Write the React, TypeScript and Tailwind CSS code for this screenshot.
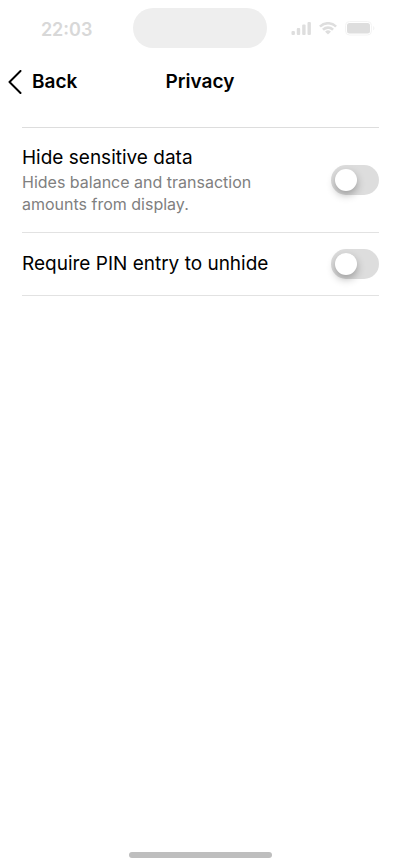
import { useState } from "react";

function StatusBar() {
  return (
    <div className="grid h-14 grid-cols-3 items-center">
      <span className="pt-1 text-center text-lg font-semibold leading-6 text-[#d8d8d8]">22:03</span>
      <div className="h-10 w-full rounded-full bg-[#eeeeee]" />
      <div className="flex items-center justify-center gap-2">
        <svg width="20" height="13" viewBox="0 0 20 13" fill="#dedede" aria-hidden="true">
          <rect x="0.5" y="9" width="3.4" height="4" rx="1" />
          <rect x="5.8" y="6" width="3.4" height="7" rx="1" />
          <rect x="11.2" y="2.5" width="3.4" height="10.5" rx="1" />
          <rect x="16.5" y="0" width="3.4" height="13" rx="1" />
        </svg>
        <svg width="18" height="13" viewBox="0 0 18 13" fill="#dedede" aria-hidden="true">
          <path d="M9 2.6c2.6 0 5 1 6.9 2.7.1.1.4.1.5 0l1.3-1.3c.2-.2.2-.4 0-.6A12.7 12.7 0 0 0 .3 3.4c-.2.2-.2.4 0 .6l1.3 1.3c.1.1.4.1.5 0A10.1 10.1 0 0 1 9 2.6Z" />
          <path d="M9 6.9c1.4 0 2.8.5 3.8 1.5.2.1.4.1.6 0l1.3-1.4c.2-.1.2-.4 0-.5a8.3 8.3 0 0 0-11.4 0c-.2.1-.2.4 0 .5l1.3 1.4c.2.1.4.1.6 0A5.7 5.7 0 0 1 9 6.9Z" />
          <path d="M11.6 9.9c.2-.2.2-.4 0-.6a4 4 0 0 0-5.2 0c-.2.2-.2.4 0 .6l2.3 2.4c.2.2.4.2.6 0Z" />
        </svg>
        <svg width="30" height="15" viewBox="0 0 30 15" fill="none" aria-hidden="true">
          <rect x="0.5" y="0.5" width="26" height="13.5" rx="4" stroke="#f4f4f4" />
          <rect x="2" y="2" width="23" height="10.5" rx="2.5" fill="#dedede" />
          <path d="M28 5v4.5c.9-.4 1.5-1.3 1.5-2.25S28.9 5.4 28 5Z" fill="#f4f4f4" />
        </svg>
      </div>
    </div>
  );
}

function Header() {
  return (
    <header className="grid h-[52px] grid-cols-[1fr_auto_1fr] items-center px-2 text-[19px] font-semibold leading-6">
      <button type="button" className="flex items-center gap-2.5 justify-self-start">
        <svg width="14" height="24" viewBox="0 0 14 24" fill="none" stroke="black" strokeWidth="2" strokeLinecap="round" strokeLinejoin="round" aria-hidden="true">
          <path d="M12.5 1 1.5 12l11 11" />
        </svg>
        Back
      </button>
      <h1>Privacy</h1>
    </header>
  );
}

type SettingProps = { id: string; title: string; description?: string };

function Setting({ id, title, description }: SettingProps) {
  const [on, setOn] = useState(false);
  return (
    <li className="flex items-center justify-between gap-4 border-b border-[#e2e2e2] py-4">
      <div className="max-w-[250px] pb-px">
        <label htmlFor={id} className="block whitespace-nowrap text-[19px] leading-[27px]">{title}</label>
        {description && <p className="text-base leading-[22px] text-[#808080]">{description}</p>}
      </div>
      <input
        id={id}
        type="checkbox"
        role="switch"
        checked={on}
        onChange={(e) => setOn(e.target.checked)}
        className="flex h-[30px] w-12 shrink-0 appearance-none items-center rounded-full bg-[#dddddd] px-1 before:h-[22px] before:w-[22px] before:rounded-full before:bg-white before:shadow-[0_4px_8px_rgba(0,0,0,0.3)] checked:justify-end checked:bg-green-500"
      />
    </li>
  );
}

export default function App() {
  return (
    <div className="flex min-h-screen flex-col bg-white font-['Inter',sans-serif] text-black">
      <StatusBar />
      <Header />
      <main className="mt-[19px] grow pl-[22px] pr-[21px]">
        <ul className="border-t border-[#dddddd]">
          <Setting
            id="hide"
            title="Hide sensitive data"
            description="Hides balance and transaction amounts from display."
          />
          <Setting id="pin" title="Require PIN entry to unhide" />
        </ul>
      </main>
      <div className="mx-auto mb-2 h-1.5 w-[143px] rounded-full bg-[#bebebe]" />
    </div>
  );
}
